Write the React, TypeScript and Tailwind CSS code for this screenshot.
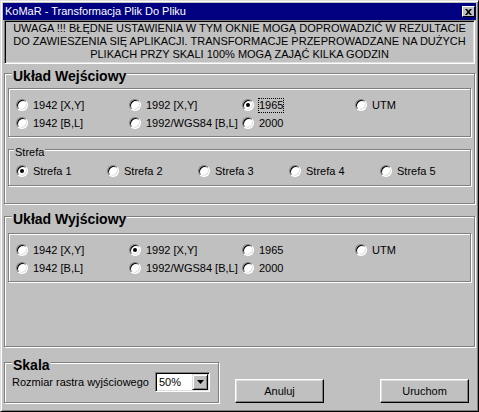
import type { ReactNode } from "react";

const etched = "border border-[#808080] shadow-[inset_1px_1px_0_#fff,1px_1px_0_#fff]";

function Radio({ checked = false }: { checked?: boolean }) {
  return (
    <span className="flex h-[12px] w-[12px] shrink-0 items-center justify-center rounded-full border border-t-[#808080] border-l-[#808080] border-r-white border-b-white bg-white shadow-[inset_1px_1px_0_#000,inset_-1px_-1px_0_#dfdfdf]">
      {checked && <span className="h-[4px] w-[4px] rounded-full bg-black" />}
    </span>
  );
}

function Option({ label, checked, focus }: { label: string; checked?: boolean; focus?: boolean }) {
  return (
    <label className="flex h-[18px] items-center gap-[5px] whitespace-nowrap">
      <Radio checked={checked} />
      <span className={focus ? "outline-1 outline-dotted outline-black" : ""}>{label}</span>
    </label>
  );
}

function Group({ title, className, children }: { title: string; className: string; children: ReactNode }) {
  return (
    <div className={`relative mx-[1px] ${etched} ${className}`}>
      <span className="absolute -top-[6px] left-[7px] bg-[#c0c0c0] px-[1px] text-[14px] font-bold leading-[16px]">
        {title}
      </span>
      {children}
    </div>
  );
}

function SystemPanel({ checked }: { checked: string }) {
  const opts = ["1942 [X,Y]", "1992 [X,Y]", "1965", "UTM", "1942 [B,L]", "1992/WGS84 [B,L]", "2000"];
  return (
    <div className={`h-[49px] pl-[7px] pt-[7px] ${etched}`}>
      <div className="grid grid-cols-[113px_113px_113px_113px]">
        {opts.map((o) => (
          <Option key={o} label={o} checked={o === checked} focus={checked === "1965" && o === "1965"} />
        ))}
      </div>
    </div>
  );
}

function Button({ children, className }: { children: ReactNode; className: string }) {
  return (
    <button className={`flex h-[24px] w-[89px] items-center justify-center border border-t-white border-l-white border-r-black border-b-black bg-[#c0c0c0] shadow-[inset_-1px_-1px_0_#808080,inset_1px_1px_0_#dfdfdf] ${className}`}>
      {children}
    </button>
  );
}

export default function App() {
  return (
    <div className="h-[412px] w-[479px] bg-[#c0c0c0] font-['Liberation_Sans',Arial,sans-serif] text-[11px] leading-[13px] text-black">
      <div className="flex h-[412px] w-[479px] flex-col border border-t-[#dfdfdf] border-l-[#dfdfdf] border-r-black border-b-black p-[2px] shadow-[inset_1px_1px_0_#fff,inset_-1px_-1px_0_#808080]">
        {/* title bar */}
        <div className="flex h-[17px] shrink-0 items-center justify-between bg-[#000080] pl-[2px] pr-[1px] text-white">
          <span>KoMaR - Transformacja Plik Do Pliku</span>
          <span className="flex h-[11px] w-[13px] items-center justify-center border border-t-white border-l-white border-r-black border-b-black bg-[#c0c0c0]">
            <svg width="7" height="6" viewBox="0 0 7 6">
              <path d="M0 0h2l1.5 1.8L5 0h2L4.5 3 7 6H5L3.5 4.2 2 6H0l2.5-3z" fill="#000" />
            </svg>
          </span>
        </div>

        {/* warning */}
        <div className="mx-[1px] h-[44px] shrink-0 border border-t-[#808080] border-l-[#808080] border-r-white border-b-white pt-[1px] text-center shadow-[inset_1px_1px_0_#000,inset_-1px_-1px_0_#dfdfdf]">
          <div className="whitespace-nowrap">UWAGA !!! BŁĘDNE USTAWIENIA W TYM OKNIE MOGĄ DOPROWADZIĆ W REZULTACIE</div>
          <div className="whitespace-nowrap">DO ZAWIESZENIA SIĘ APLIKACJI. TRANSFORMACJE PRZEPROWADZANE NA DUŻYCH</div>
          <div className="whitespace-nowrap">PLIKACH PRZY SKALI 100% MOGĄ ZAJĄĆ KILKA GODZIN</div>
        </div>

        {/* input system */}
        <Group title="Układ Wejściowy" className="mt-[9px] h-[131px] shrink-0 px-[3px] pt-[14px]">
          <SystemPanel checked="1965" />
          <div className={`relative mt-[12px] h-[37px] pl-[7px] pt-[12px] ${etched}`}>
            <span className="absolute -top-[4px] left-[5px] bg-[#c0c0c0] px-[1px]">Strefa</span>
            <div className="grid grid-cols-[91px_91px_91px_91px_91px]">
              {[1, 2, 3, 4, 5].map((n) => (
                <Option key={n} label={`Strefa ${n}`} checked={n === 1} />
              ))}
            </div>
          </div>
        </Group>

        {/* output system */}
        <Group title="Układ Wyjściowy" className="mt-[12px] h-[131px] shrink-0 px-[3px] pt-[16px]">
          <SystemPanel checked="1992 [X,Y]" />
        </Group>

        {/* bottom row */}
        <div className="ml-[1px] mt-[15px] flex items-start">
          <div className={`relative h-[41px] w-[215px] ${etched}`}>
            <span className="absolute -top-[6px] left-[7px] bg-[#c0c0c0] px-[1px] text-[14px] font-bold leading-[16px]">
              Skala
            </span>
            <div className="flex items-center pl-[7px] pt-[9px]">
              <span className="w-[143px] whitespace-nowrap">Rozmiar rastra wyjściowego</span>
              <div className="flex h-[20px] w-[55px] items-center justify-between border border-t-[#808080] border-l-[#808080] border-r-white border-b-white bg-white pl-[3px] pr-[1px] shadow-[inset_1px_1px_0_#000,inset_-1px_-1px_0_#dfdfdf]">
                <span>50%</span>
                <span className="flex h-[16px] w-[16px] items-center justify-center border border-t-[#dfdfdf] border-l-[#dfdfdf] border-r-black border-b-black bg-[#c0c0c0] shadow-[inset_1px_1px_0_#fff,inset_-1px_-1px_0_#808080]">
                  <svg width="7" height="4" viewBox="0 0 7 4">
                    <path d="M0 0h7L3.5 4z" fill="#000" />
                  </svg>
                </span>
              </div>
            </div>
          </div>
          <Button className="ml-[16px] mt-[17px]">Anuluj</Button>
          <Button className="ml-[56px] mt-[17px]">Uruchom</Button>
        </div>
      </div>
    </div>
  );
}
